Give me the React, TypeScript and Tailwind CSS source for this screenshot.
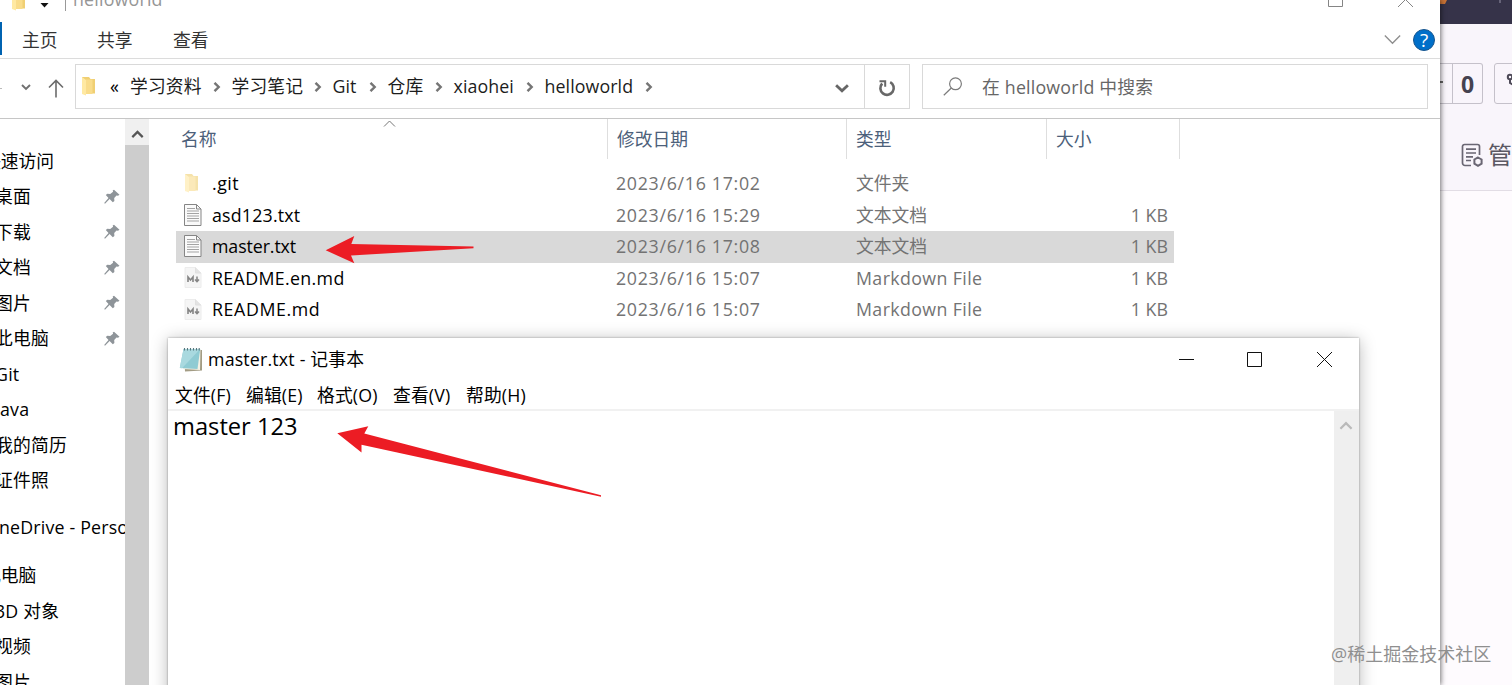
import type { ReactNode } from 'react';

const quickAccess = [
    { name: '快速访问', top: true, pinned: false },
    { name: '桌面', top: false, pinned: true },
    { name: '下载', top: false, pinned: true },
    { name: '文档', top: false, pinned: true },
    { name: '图片', top: false, pinned: true },
    { name: '此电脑', top: false, pinned: true },
    { name: 'Git', top: false, pinned: false },
    { name: 'Java', top: false, pinned: false },
    { name: '我的简历', top: false, pinned: false },
    { name: '证件照', top: false, pinned: false },
];

const thisPc = [
    { name: '此电脑', top: true, pinned: false },
    { name: '3D 对象', top: false, pinned: false },
    { name: '视频', top: false, pinned: false },
    { name: '图片', top: false, pinned: false },
];

const files = [
    { name: '.git', tracking: 'tracking-[0.500px]', date: '2023/6/16 17:02', type: '文件夹', size: '', icon: 'folder' },
    { name: 'asd123.txt', tracking: 'tracking-[0.200px]', date: '2023/6/16 15:29', type: '文本文档', size: '1 KB', icon: 'text' },
    { name: 'master.txt', tracking: 'tracking-[-0.100px]', date: '2023/6/16 17:08', type: '文本文档', size: '1 KB', icon: 'text', selected: true },
    { name: 'README.en.md', tracking: 'tracking-[0.350px]', date: '2023/6/16 15:07', type: 'Markdown File', size: '1 KB', icon: 'md' },
    { name: 'README.md', tracking: 'tracking-[0.600px]', date: '2023/6/16 15:07', type: 'Markdown File', size: '1 KB', icon: 'md' },
];

const crumbs = [
    { name: '学习资料', width: 'w-[101.500px]' },
    { name: '学习笔记', width: 'w-[101px]' },
    { name: 'Git', width: 'w-[55px]' },
    { name: '仓库', width: 'w-[66px]' },
    { name: 'xiaohei', width: 'w-[91px]' },
    { name: 'helloworld', width: 'w-[119px]' },
];

const menus = [
    { name: '文件(F)', width: 'w-[71px]' },
    { name: '编辑(E)', width: 'w-[71px]' },
    { name: '格式(O)', width: 'w-[76px]' },
    { name: '查看(V)', width: 'w-[73px]' },
    { name: '帮助(H)', width: 'w-[70px]' },
];

const Chevron = ({ className, d, size = 10, stroke = 2.4 }: { className?: string; d: string; size?: number; stroke?: number }) => (
    <svg className={className} width={size} height={size} viewBox="0 0 10 10" fill="none" stroke="currentColor" strokeWidth={stroke}>
        <path d={d} />
    </svg>
);

const Folder = ({ className }: { className?: string }) => (
    <svg className={className} width="16" height="20" viewBox="0 0 16 20">
        <path d="M1 1h7l1.500 2H14v14.500H4L1 18z" fill="#f0cf73" />
        <path d="M1 1l4 3v15.500L1 18z" fill="#ffe9a3" />
        <path d="M5 3.500h6.500V18H5z" fill="#f9dc8b" />
    </svg>
);

const FileIcon = ({ icon }: { icon: string }) => {
    if (icon === 'folder') {
        return <Folder className="opacity-60" />;
    }
    if (icon === 'text') {
        return (
            <svg width="18" height="22" viewBox="0 0 18 22" fill="none">
                <path d="M.5.5h12l4.500 4.500v16.500H.5z" fill="#fafafa" stroke="#858585" />
                <path d="M12.500.5V5H17" stroke="#858585" />
                <path d="M3 4.500h8M3 7h12M3 9.500h12M3 12h12M3 14.500h12M3 17h12" stroke="#a3a3a3" />
            </svg>
        );
    }
    return (
        <svg width="18" height="21" viewBox="0 0 18 21" fill="none">
            <path d="M1 .5h10.500L17 6v14.500H1z" fill="#f5f5f5" stroke="#ececec" />
            <path d="M11.500.5V6H17" fill="#e4e4e4" stroke="#e0e0e0" />
            <path d="M4 15v-5l2.500 3L9 10v5" stroke="#858585" strokeWidth="1.600" />
            <path d="M13 9.500V14M11 12.500l2 2.200 2-2.200" stroke="#858585" strokeWidth="1.500" />
        </svg>
    );
};

const Pin = () => (
    <svg className="mt-[1px] shrink-0" width="16" height="16" viewBox="0 0 16 16" fill="#8e9499">
        <path d="M10 .7l5.500 5-1.500 1.100-1.500-.2-2.300 2.500.2 2.800-1.600 1.300-3.200-3.100L1 14.800l-.8-.8 4.300-5L1.800 6l1.500-1.200 2.900.2 2.900-2.200-.4-1.200z" />
    </svg>
);

const SideItem = ({ name, top, pinned }: { name: string; top: boolean; pinned: boolean }) => (
    <div className="flex h-[35.500px] items-center justify-between pr-[5px]">
        <span className={top ? '-ml-[17px]' : '-ml-[5px] tracking-[0.200px]'}>{name}</span>
        {pinned && <Pin />}
    </div>
);

const Column = ({ width, children }: { width: string; children: ReactNode }) => (
    <div className={`${width} flex h-[40px] items-center border-r border-[#dedede] pl-[9px] text-[#4c607a]`}>{children}</div>
);

const Explorer = () => (
    <div className="z-10 flex h-[685px] w-[1440px] shrink-0 flex-col bg-white shadow-[1px_0_5px_rgba(0,0,0,0.55)]">
        <div className="flex h-[21px] shrink-0 items-start overflow-hidden">
            <Folder className="-mt-[9px] ml-[11px]" />
            <svg className="ml-[12px] mt-[3px]" width="11" height="5" viewBox="0 0 11 5">
                <path d="M1.500 0h8l-4 4.500z" fill="#111" />
            </svg>
            <div className="ml-[15px] h-[11px] w-px bg-[#999]" />
            <span className="-mt-[14px] ml-[7px] leading-[26px] tracking-[0.200px] text-[#969696]">helloworld</span>
            <svg className="ml-auto" width="90" height="8" viewBox="0 0 90 8" fill="none" stroke="#858585">
                <path d="M1.500-8h14V6.500h-14zM71 7l7.500-7.500L86 7" />
            </svg>
            <div className="w-[23px]" />
        </div>

        <div className="flex h-[38px] shrink-0 items-start border-b border-[#dcdcdc] text-[#333]">
            <div className="mt-[1px] h-[33px] w-[2px] bg-[#0063b1]" />
            <div className="flex h-[37px] items-center pl-[20px]">
                <span className="w-[75px]">主页</span>
                <span className="w-[76px]">共享</span>
                <span>查看</span>
            </div>
            <div className="ml-auto flex h-[37px] items-center text-[#8e8e8e]">
                <Chevron d="M.5 2.700L5 7.200l4.500-4.500" size={17} stroke={0.8} />
                <div className="ml-[12px] mr-[5px] flex size-[22px] items-center justify-center rounded-full border border-[#17558e] bg-[#006fc9] text-[19px] text-white">
                    ?
                </div>
            </div>
        </div>

        <div className="flex h-[60px] shrink-0 items-center border-b border-[#c6c6c6]">
            <div className="h-px w-[2px] bg-[#bbb]" />
            <Chevron className="-mt-[4px] ml-[19px] text-[#707070]" d="M1 3l4 4 4-4" stroke={1.9} />
            <svg className="ml-[17px]" width="16" height="19" viewBox="0 0 16 19" fill="none" stroke="#6c6c6c" strokeWidth="1.600">
                <path d="M8 18.500V1.500M1 8.500l7-7 7 7" />
            </svg>
            <div className="ml-[11px] mt-[-4px] flex h-[45px] w-[835px] items-center border border-[#d9d9d9]">
                <Folder className="ml-[5px] mt-[-1px]" />
                <span className="-mt-[2px] ml-[13px] w-[20px]">«</span>
                {crumbs.map((crumb) => (
                    <div key={crumb.name} className={`${crumb.width} flex shrink-0 items-center justify-between whitespace-nowrap text-[#1c1c1c]`}>
                        <span className="-mt-[2px] tracking-[0.100px]">{crumb.name}</span>
                        <Chevron className="mr-[10px] shrink-0 text-[#757575]" d="M2.500 .8L6.700 5 2.500 9.200" />
                    </div>
                ))}
                <Chevron className="ml-auto mt-[2px] text-[#666]" d="M.8 3L5 7l4.200-4" size={14} stroke={2} />
                <div className="ml-[15px] flex h-full w-[45px] items-center justify-center border-l border-[#d9d9d9]">
                    <svg className="mt-[2px]" width="18" height="18" viewBox="0 0 18 18" fill="none" stroke="#686868" strokeWidth="2.600">
                        <path d="M12.200 3.200A6.700 6.700 0 1 1 4.200 4.500" />
                        <path d="M1.500 2.200h5.700v5.600" strokeWidth="2" />
                    </svg>
                </div>
            </div>
            <div className="ml-[12px] mt-[-4px] flex h-[45px] w-[506px] items-center border border-[#d9d9d9] text-[#666]">
                <svg className="ml-[20px]" width="20" height="19" viewBox="0 0 20 19" fill="none" stroke="#7b7b7b" strokeWidth="1.200">
                    <circle cx="12.500" cy="6.800" r="5.900" />
                    <path d="M8.300 11L.8 18.200" />
                </svg>
                <span className="ml-[19px] tracking-[0.200px]">在 helloworld 中搜索</span>
            </div>
        </div>

        <div className="flex min-h-0 flex-1">
            <div className="w-[125px] shrink-0 overflow-hidden whitespace-nowrap pt-[24px]">
                {quickAccess.map((item) => (
                    <SideItem key={item.name} {...item} />
                ))}
                <div className="my-[12px] flex h-[35.500px] items-center">
                    <span className="-mt-[2px] -ml-[15px] tracking-[0.180px]">OneDrive - Personal</span>
                </div>
                {thisPc.map((item) => (
                    <SideItem key={item.name} {...item} />
                ))}
            </div>
            <div className="w-[24px] shrink-0 bg-[#cdcdcd]">
                <div className="flex h-[26px] items-center justify-center bg-[#f0f0f0] pt-[4px] text-[#555]">
                    <Chevron d="M1 7l4-4 4 4" size={13} stroke={1.7} />
                </div>
            </div>
            <div className="ml-[23px] flex-1">
                <div className="relative flex">
                    <Column width="w-[436px]">名称</Column>
                    <Column width="w-[239px]">修改日期</Column>
                    <Column width="w-[200px]">类型</Column>
                    <Column width="w-[133px]">大小</Column>
                    <svg className="absolute left-[211px] top-[1px]" width="13" height="7" viewBox="0 0 13 7" fill="none" stroke="#777">
                        <path d="M1 6.500l5.500-5.500L12 6.500" />
                    </svg>
                </div>
                <div className="ml-[4px] mt-[9px] w-[998px]">
                    {files.map((file) => (
                        <div key={file.name} className={`flex h-[31.500px] items-center text-[#737373] ${file.selected ? 'bg-[#d9d9d9]' : ''}`}>
                            <div className="-mt-[1px] w-[36px] pl-[8px]">
                                <FileIcon icon={file.icon} />
                            </div>
                            <span className={`-mt-[1.500px] w-[404px] text-black ${file.tracking}`}>{file.name}</span>
                            <span className="-mt-[1.500px] w-[240px] tracking-[0.700px]">{file.date}</span>
                            <span className={`-mt-[1.500px] w-[240px] ${file.icon === 'md' ? 'tracking-[0.380px]' : ''}`}>{file.type}</span>
                            <span className="-mt-[1.500px] flex-1 pr-[6px] text-right">{file.size}</span>
                        </div>
                    ))}
                </div>
            </div>
        </div>
    </div>
);

const NotepadIcon = () => (
    <svg width="24" height="25" viewBox="0 0 24 25">
        <path d="M5 3h18v20.500L6 24.500z" fill="#a39c84" />
        <path d="M5 2h16.500L21 23 4 22z" fill="#f4f1e4" />
        <path d="M4.500 2h16.700L18.500 22 .8 21z" fill="#8fcbd3" />
        <path d="M4.500 2h16.700L3 21.200.8 21z" fill="#a9d9df" />
        <path d="M5.500 1v2.500M8.500 1v2.500M11.500 1v2.500M14.500 1v2.500M17.500 1v2.500M20.200 1v2.500" stroke="#56767c" strokeWidth="1.100" />
    </svg>
);

const Notepad = () => (
    <div className="absolute left-[168px] top-[338px] z-20 flex h-[420px] w-[1191px] flex-col bg-white text-black shadow-[0_2px_16px_rgba(0,0,0,0.28),0_0_2px_rgba(0,0,0,0.35)]">
        <div className="flex h-[42px] shrink-0 items-center">
            <div className="ml-[11px] mr-[5px]">
                <NotepadIcon />
            </div>
            <span className="-mt-[1px] tracking-[0.180px]">master.txt - 记事本</span>
            <svg className="ml-auto mr-[26px]" width="155" height="16" viewBox="0 0 155 16" fill="none" stroke="#111">
                <path d="M1 8.500h15" />
                <path d="M69.500 1.500h14v14h-14z" />
                <path d="M139 1l15 15M154 1l-15 15" />
            </svg>
        </div>
        <div className="flex h-[31px] shrink-0 items-center border-b-2 border-[#f1f1f1] pl-[7px]">
            {menus.map((menu) => (
                <span key={menu.name} className={`${menu.width} whitespace-nowrap tracking-[0.150px]`}>
                    {menu.name}
                </span>
            ))}
        </div>
        <div className="flex flex-1">
            <div className="flex-1 pl-[5px] text-[23.700px] leading-[31px]">master 123</div>
            <div className="w-[25px] bg-[#efefef] pl-[5px] pt-[8px] text-[#bababa]">
                <Chevron d="M1 7l4-4 4 4" size={14} stroke={1.600} />
            </div>
        </div>
    </div>
);

// repository page showing behind the explorer window
const BrowserStrip = () => (
    <div className="flex w-[72px] shrink-0 flex-col overflow-hidden bg-[#fefbfe]">
        <div className="h-[24px] shrink-0 bg-[#363349]">
            <svg width="72" height="6" viewBox="0 0 72 6">
                <path d="M0 0h7L5 4H0z" fill="#c87336" />
                <path d="M60 0v3" stroke="#777488" strokeWidth="1.500" />
            </svg>
        </div>
        <div className="h-[167px] shrink-0 border-b border-[#e2dde5] bg-[#f9f5fb] text-[#5b5863]">
            <div className="mt-[39px] flex h-[41px] w-[100px]">
                <div className="flex w-[43px] items-center rounded-r-[3px] border border-l-0 border-[#c5c1ca]">
                    <div className="flex h-full w-[13px] items-center border-r border-[#c5c1ca]">
                        <div className="mb-[4px] h-[2px] w-[3px] bg-[#666]" />
                    </div>
                    <span className="ml-[8px] text-[23px] font-bold text-[#45424f]">0</span>
                </div>
                <div className="ml-[11px] flex w-[46px] items-center rounded-[3px] border border-[#c5c1ca] pl-[11px]">
                    <svg className="mb-[4px]" width="20" height="20" viewBox="0 0 20 20" fill="none" stroke="#4e4a58" strokeWidth="2">
                        <circle cx="4" cy="5" r="2.200" />
                        <circle cx="14" cy="5" r="2.200" />
                        <path d="M4 7v4l5 3 5-3V7M9 14v5" />
                    </svg>
                </div>
            </div>
            <div className="mt-[37px] flex w-[100px] items-center pl-[21px]">
                <svg className="shrink-0" width="23" height="24" viewBox="0 0 23 24" fill="none" stroke="#6a6673" strokeWidth="1.700">
                    <path d="M10 22.500H4A2.500 2.500 0 0 1 1.500 20V3.500A2 2 0 0 1 3.500 1.500h13a2 2 0 0 1 2 2V12" />
                    <path d="M5 6.200h10M5 10h10M5 13.800h7M5 17.500h5" />
                    <path d="M17 14.500l3.600 2v4.200L17 22.800l-3.600-2.100v-4.200z" strokeWidth="2" />
                </svg>
                <span className="ml-[4px] whitespace-nowrap text-[24px] leading-[28px]">管理</span>
            </div>
        </div>
    </div>
);

const App = () => (
    <div className="relative flex h-[685px] w-[1512px] overflow-hidden bg-white font-['Open_Sans','Noto_Sans_CJK_SC',sans-serif] text-[17.800px] leading-[24px] text-black">
        <Explorer />
        <BrowserStrip />
        <Notepad />
        <svg className="pointer-events-none absolute left-0 top-0 z-30" width="1512" height="685" fill="#ec1c24">
            <path d="M325.700 250.300L354.300 236l-3 8L473.500 246.500v1.800L351 255.600l3.300 7.700z" />
            <path d="M337.300 433.300l31-7.100-4 7.400L601 495.300v1.500L361.500 444.700v7.800z" />
        </svg>
        <span className="absolute left-[1331px] top-[642px] z-30 whitespace-nowrap text-[18px] text-[#8f8f8f]">@稀土掘金技术社区</span>
    </div>
);

export default App;
